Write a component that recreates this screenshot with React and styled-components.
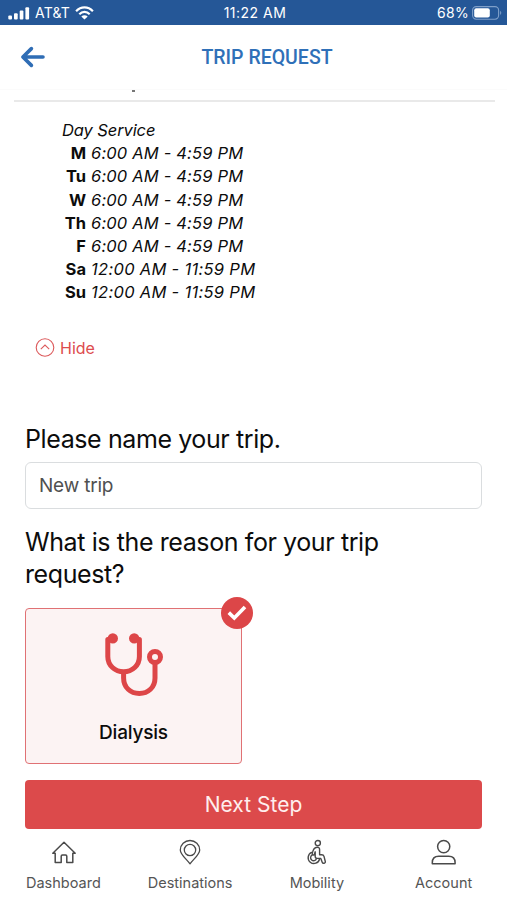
import React from "react";
import styled, { createGlobalStyle } from "styled-components";

const HOURS = [
  ["M", "6:00 AM - 4:59 PM"],
  ["Tu", "6:00 AM - 4:59 PM"],
  ["W", "6:00 AM - 4:59 PM"],
  ["Th", "6:00 AM - 4:59 PM"],
  ["F", "6:00 AM - 4:59 PM"],
  ["Sa", "12:00 AM - 11:59 PM"],
  ["Su", "12:00 AM - 11:59 PM"],
];

const SignalIcon = () => (
  <svg width="22" height="13" viewBox="0 0 22 13" fill="#ffffff">
    <rect x="0.3" y="8.6" width="3.7" height="4" rx="1" />
    <rect x="6" y="6.2" width="3.7" height="6.4" rx="1" />
    <rect x="11.7" y="3.4" width="3.7" height="9.2" rx="1" />
    <rect x="17.4" y="0.2" width="3.7" height="12.4" rx="1" />
  </svg>
);

const WifiIcon = () => (
  <svg width="19" height="14" viewBox="0 0 19 14" fill="none" stroke="#ffffff" strokeWidth="2.2">
    <path d="M1.1 5.2C6 0.2 13 0.2 17.9 5.2" />
    <path d="M4.3 8.2C7.4 5.1 11.6 5.1 14.7 8.2" />
    <path d="M9.5 13.6L6.3 10.5C8.2 8.8 10.8 8.8 12.7 10.5Z" fill="#ffffff" stroke="none" />
  </svg>
);

const BatteryIcon = () => (
  <svg width="30" height="14" viewBox="0 0 30 14" fill="none">
    <rect x="0.6" y="0.6" width="26" height="12.6" rx="3.6" stroke="#7f9fc9" strokeWidth="1.1" />
    <rect x="2.2" y="2.2" width="15.6" height="9.4" rx="2" fill="#ffffff" />
    <path d="M28.1 4.8C29.7 5.6 29.7 8.2 28.1 9Z" fill="#7f9fc9" />
  </svg>
);

const BackIcon = () => (
  <svg width="26" height="22" viewBox="0 0 26 22" fill="none" stroke="#2f6db5" strokeWidth="3.6" strokeLinecap="round" strokeLinejoin="round">
    <path d="M11.4 2.6L2.9 11L11.4 19.4M3.6 11H23" />
  </svg>
);

const HideIcon = () => (
  <svg width="20" height="20" viewBox="0 0 20 20" fill="none" stroke="#dc5a5c" strokeWidth="1.1">
    <circle cx="10" cy="9.5" r="8.8" />
    <path d="M5.8 11.1L10 7.1L14.2 11.1" />
  </svg>
);

const StethoscopeIcon = () => (
  <svg width="62" height="66" viewBox="0 0 62 66" fill="none" stroke="#dd4648" strokeWidth="5">
    <path d="M9 6.6H4.8V23.5C4.8 32.5 12 38.8 20.6 38.8S36.4 32.5 36.4 23.5V6.6H32" strokeLinejoin="round" />
    <path d="M20.6 38.8V45C20.6 54.5 27.5 60.5 36.3 60.5S52 54.5 52 45V30" />
    <circle cx="52" cy="24" r="5.5" />
    <circle cx="9.8" cy="5.4" r="5.2" fill="#dd4648" stroke="none" />
    <circle cx="31.2" cy="5.4" r="5.2" fill="#dd4648" stroke="none" />
  </svg>
);

const CheckIcon = () => (
  <svg width="20" height="16" viewBox="0 0 20 16" fill="none" stroke="#ffffff" strokeWidth="3.6">
    <path d="M1.8 7.6L7.3 13L18 2" />
  </svg>
);

const HomeIcon = () => (
  <svg width="28" height="28" viewBox="0 0 28 28" fill="none" stroke="#4a4a4a" strokeWidth="1.5" strokeLinejoin="round">
    <path d="M15 3.3L3.8 14.3H6.2V23.5H12.2V17.2Q12.2 16 13.4 16H16.6Q17.8 16 17.8 17.2V23.5H23.8V14.3H26.2Z" />
  </svg>
);

const PinIcon = () => (
  <svg width="28" height="28" viewBox="0 0 28 28" fill="none" stroke="#4a4a4a" strokeWidth="1.3" strokeLinejoin="round">
    <path d="M14 24.8C10.5 20.2 4.3 15.4 4.3 10.9A9.7 9.4 0 0 1 23.7 10.9C23.7 15.4 17.5 20.2 14 24.8Z" />
    <circle cx="14" cy="11" r="5.7" />
  </svg>
);

const WheelchairIcon = () => (
  <svg width="28" height="28" viewBox="0 0 28 28" fill="none" stroke="#4a4a4a" strokeWidth="1.4" strokeLinecap="round" strokeLinejoin="round">
    <circle cx="14.8" cy="4.1" r="2.6" />
    <path d="M8.6 13.4A5.8 5.8 0 1 0 16.6 20" />
    <path d="M14 8.2C11.6 8.3 10 10.5 9.2 14.6C9 16.2 11 16.6 11.4 15.2L12.2 12.8V17.6Q12.2 19.4 14 19.4H17.8L19.2 23.2C19.8 25 22.8 24.4 22.3 22.5L21 17.4Q20.5 15.7 18.8 15.7H16.6V10.5Q16.6 8.1 14 8.2Z" />
    <path d="M9 16.2A3 3 0 1 0 13.4 19.8" />
  </svg>
);

const AccountIcon = () => (
  <svg width="28" height="28" viewBox="0 0 28 28" fill="none" stroke="#4a4a4a" strokeWidth="1.5" strokeLinejoin="round">
    <circle cx="13.7" cy="7.6" r="6.1" />
    <path d="M2.3 24.7V23.7C2.3 19.7 4.9 17.3 8.7 17.3H18.7C22.5 17.3 25.1 19.7 25.1 23.7V24.7Z" />
  </svg>
);

const TABS = [
  { label: "Dashboard", icon: HomeIcon },
  { label: "Destinations", icon: PinIcon },
  { label: "Mobility", icon: WheelchairIcon },
  { label: "Account", icon: AccountIcon },
];

const App = () => {
  return (
    <Screen>
      <GlobalStyle />
      <StatusBar>
        <Carrier>
          <SignalIcon />
          <span>AT&amp;T</span>
          <WifiIcon />
        </Carrier>
        <Clock>11:22 AM</Clock>
        <Battery>
          <span>68%</span>
          <BatteryIcon />
        </Battery>
      </StatusBar>
      <Header>
        <BackIcon />
        <PageTitle>TRIP REQUEST</PageTitle>
      </Header>
      <Content>
        <Clipped />
        <Schedule>
          <ServiceName>Day Service</ServiceName>
          {HOURS.map(([day, hours]) => (
            <HoursRow key={day}>
              <Day>{day}</Day>
              <Hours $long={hours.length > 17}>{hours}</Hours>
            </HoursRow>
          ))}
        </Schedule>
        <HideButton>
          <HideIcon />
          <span>Hide</span>
        </HideButton>
        <Form>
          <Question>Please name your trip.</Question>
          <NameInput defaultValue="New trip" />
          <Question>
            What is the reason for your trip
            <br />
            request?
          </Question>
          <ReasonCard>
            <Badge>
              <CheckIcon />
            </Badge>
            <StethoscopeIcon />
            <Reason>Dialysis</Reason>
          </ReasonCard>
          <NextButton>Next Step</NextButton>
        </Form>
      </Content>
      <TabBar>
        {TABS.map(({ label, icon: Icon }) => (
          <Tab key={label}>
            <Icon />
            <span>{label}</span>
          </Tab>
        ))}
      </TabBar>
    </Screen>
  );
};

const GlobalStyle = createGlobalStyle`
  * {
    box-sizing: border-box;
  }
  body {
    margin: 0;
    background: #ffffff;
  }
  svg {
    display: block;
    flex: none;
  }
`;

const Screen = styled.div`
  display: flex;
  flex-direction: column;
  width: 507px;
  height: 900px;
  overflow: hidden;
  background: #ffffff;
  color: #0c0c0c;
  font-family: Inter, "Liberation Sans", sans-serif;
`;

const StatusBar = styled.div`
  display: grid;
  grid-template-columns: 1fr auto 1fr;
  align-items: center;
  flex: none;
  height: 25px;
  padding: 1px 5px 0 8px;
  background: #255797;
  color: #ffffff;
  font-size: 14px;
  line-height: 24px;
`;

const Carrier = styled.div`
  display: flex;
  align-items: center;
  gap: 5px;
  letter-spacing: 0.2px;
`;

const Clock = styled.div`
  letter-spacing: 0.5px;
`;

const Battery = styled.div`
  display: flex;
  align-items: center;
  justify-content: flex-end;
  gap: 3px;
  letter-spacing: 0.3px;
`;

const Header = styled.div`
  display: grid;
  grid-template-columns: 77px 1fr 50px;
  align-items: center;
  flex: none;
  height: 65px;
  padding: 0 20px;
  border-bottom: 1px solid #fbfbfb;
`;

const PageTitle = styled.div`
  padding-top: 1px;
  color: #2f70b8;
  font-family: Roboto, sans-serif;
  font-size: 19.5px;
  font-weight: 500;
  text-align: center;
`;

const Content = styled.div`
  flex: none;
  height: 739px;
`;

const Clipped = styled.div`
  height: 12px;
  margin: 0 12px 0 14px;
  border-bottom: 2px solid #e9e9e9;
  &::before {
    content: "";
    display: block;
    width: 3px;
    height: 2px;
    margin-left: 118px;
    background: #777777;
  }
`;

const Schedule = styled.div`
  padding: 17px 0 0 62px;
  font-size: 16.5px;
  line-height: 23.2px;
`;

const ServiceName = styled.div`
  font-style: italic;
  letter-spacing: -0.1px;
`;

const HoursRow = styled.div`
  display: flex;
  gap: 5px;
`;

const Day = styled.div`
  width: 24px;
  font-weight: 700;
  display: flex;
  justify-content: flex-end;
`;

const Hours = styled.div`
  font-style: italic;
  letter-spacing: ${(props) => (props.$long ? "0.3px" : "0.17px")};
  white-space: nowrap;
`;

const HideButton = styled.button`
  display: flex;
  align-items: center;
  gap: 5px;
  height: 20px;
  margin: 33px 0 0 35px;
  padding: 0;
  border: 0;
  background: none;
  color: #dd4c4e;
  font-family: inherit;
  font-size: 16px;
`;

const Form = styled.div`
  padding: 65px 25px 0;
`;

const Question = styled.div`
  font-size: 25px;
  line-height: 32px;
  letter-spacing: -0.4px;
  white-space: nowrap;
`;

const NameInput = styled.input`
  display: block;
  width: 457px;
  height: 47px;
  margin: 7px 0 17px;
  padding: 1px 13px 0;
  border: 1.5px solid #dadddf;
  border-radius: 6px;
  background: #ffffff;
  color: #505050;
  font-family: inherit;
  font-size: 19px;
  letter-spacing: -0.2px;
  outline: none;
`;

const ReasonCard = styled.div`
  position: relative;
  display: flex;
  flex-direction: column;
  align-items: center;
  width: 217px;
  height: 156px;
  margin-top: 18px;
  padding-top: 24px;
  border: 1px solid #e07174;
  border-radius: 4px;
  background: #fcf3f3;
`;

const Badge = styled.div`
  position: absolute;
  top: -12px;
  right: -12px;
  display: flex;
  align-items: center;
  justify-content: center;
  width: 32px;
  height: 32px;
  border-radius: 50%;
  background: #dc4648;
`;

const Reason = styled.div`
  margin-top: 21px;
  font-size: 19px;
  font-weight: 500;
  letter-spacing: -0.2px;
  line-height: 26px;
`;

const NextButton = styled.button`
  display: block;
  width: 457px;
  height: 49px;
  margin-top: 16px;
  padding: 1px 0 0;
  border: 0;
  border-radius: 4px;
  background: #dc4a4b;
  color: #ffeeee;
  font-family: inherit;
  font-size: 21px;
`;

const TabBar = styled.div`
  display: grid;
  grid-template-columns: repeat(4, 1fr);
  flex: none;
  padding-top: 10px;
`;

const Tab = styled.div`
  display: flex;
  flex-direction: column;
  align-items: center;
  gap: 6px;
  color: #555555;
  font-size: 14.5px;
  line-height: 20px;
`;

export default App;
